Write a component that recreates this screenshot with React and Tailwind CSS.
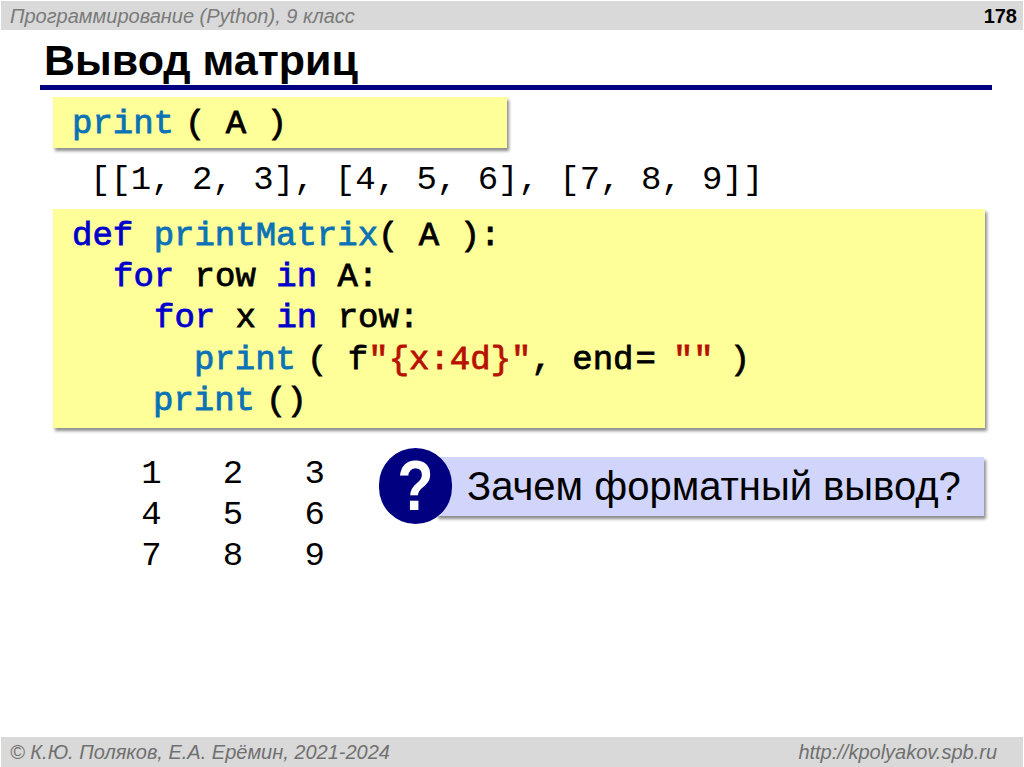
const Kw = ({ children }) => <span className="text-[#0000cc]">{children}</span>;
const Fn = ({ children }) => <span className="text-[#0b72b5]">{children}</span>;
const Str = ({ children }) => <span className="text-[#b81000]">{children}</span>;

const YellowBox = ({ className, children }) => (
  <div className={`ml-[53px] bg-[#ffff99] pl-[19px] [-webkit-text-stroke:0.8px] shadow-[2px_3px_3px_#8c8c8c] ${className}`}>
    {children}
  </div>
);

const App = () => {
  return (
    <div className="flex h-[767px] w-[1024px] flex-col overflow-hidden bg-white pt-px font-['Liberation_Sans',sans-serif]">
      <div className="mx-px flex h-[29px] items-center justify-between bg-[#d9d9d9] pl-[9px] pr-[6px]">
        <span className="text-[20px] italic text-[#7a7a7a]">Программирование (Python), 9 класс</span>
        <span className="text-[20px] font-bold leading-none text-black">178</span>
      </div>

      <h1 className="mb-[2px] ml-[44px] mt-[7px] text-[43px] font-bold leading-[46px] text-black">Вывод матриц</h1>
      <div className="ml-[40px] h-[5px] w-[952px] bg-[#000080]" />

      <div className="font-['Liberation_Mono',monospace] text-[34px] text-black">
        <YellowBox className="mt-[7px] h-[51px] w-[454px] pt-[2px] leading-[51px]">
          <Fn>print</Fn>
          <span className="ml-[11px]">( A )</span>
        </YellowBox>

        <div className="ml-[90px] mt-[12px] h-[41px] whitespace-pre leading-[41px]">
          [[1, 2, 3], [4, 5, 6], [7, 8, 9]]
        </div>

        <YellowBox className="mt-[8px] h-[219px] w-[932px] whitespace-pre pt-[7px] leading-[41.2px]">
          <div>
            <Kw>def</Kw> <Fn>printMatrix</Fn>( A ):
          </div>
          <div className="pl-[41px]">
            <Kw>for</Kw> row <Kw>in</Kw> A:
          </div>
          <div className="pl-[82px]">
            <Kw>for</Kw> x <Kw>in</Kw> row:
          </div>
          <div className="pl-[122px]">
            <Fn>print</Fn>
            <span className="ml-[11px]">( f</span>
            <Str>"{'{x:4d}'}"</Str>, end
            <span className="mx-[2px]">=</span>
            <span className="ml-[15px]" />
            <Str>""</Str>
            <span className="ml-[16px]">)</span>
          </div>
          <div className="pl-[81px]">
            <Fn>print</Fn>
            <span className="ml-[11px]">()</span>
          </div>
        </YellowBox>

        <div className="mt-[20px] flex items-start">
          <div className="ml-[80px] mt-[6px] w-[299px] whitespace-pre leading-[41px]">
            <div>   1   2   3</div>
            <div>   4   5   6</div>
            <div>   7   8   9</div>
          </div>
          <div className="flex items-center font-['Liberation_Sans',sans-serif]">
            <div className="z-10 flex h-[76px] w-[73px] items-center justify-center rounded-full bg-[#000080] text-white">
              <span className="scale-x-[.85] text-[70px] font-bold leading-none">?</span>
            </div>
            <div className="ml-[-16px] flex h-[59px] w-[548px] items-center bg-[#d2d5fb] pl-[31px] text-[40px] text-black shadow-[2px_3px_3px_#8c8c8c]">
              Зачем форматный вывод?
            </div>
          </div>
        </div>
      </div>

      <div className="mx-px mt-auto flex h-[30px] items-center justify-between bg-[#d9d9d9] pl-[9px] pr-[26px] text-[20px] italic text-[#707070]">
        <span>© К.Ю. Поляков, Е.А. Ерёмин, 2021-2024</span>
        <span>http://kpolyakov.spb.ru</span>
      </div>
    </div>
  );
};

export default App;
